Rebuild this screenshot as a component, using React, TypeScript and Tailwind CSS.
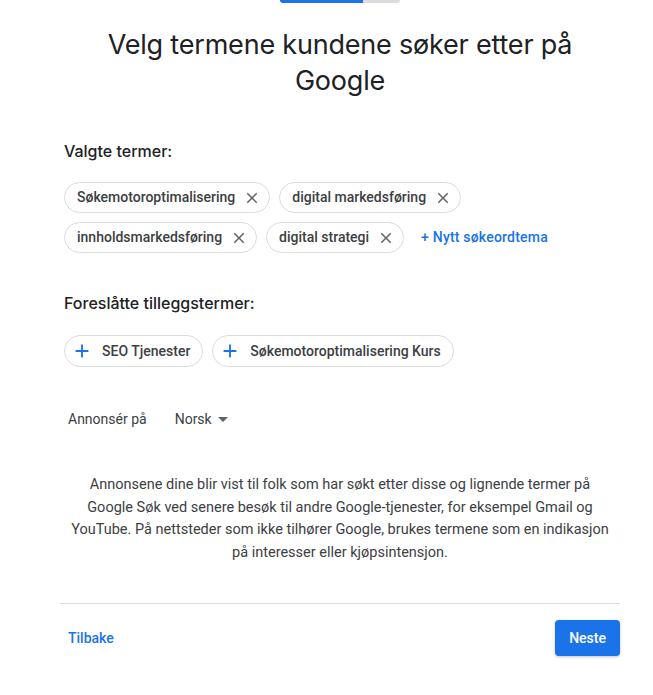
import React from "react";

const selected = [
  "Søkemotoroptimalisering",
  "digital markedsføring",
  "innholdsmarkedsføring",
  "digital strategi",
];

const suggested = ["SEO Tjenester", "Søkemotoroptimalisering Kurs"];

function CloseIcon() {
  return (
    <svg width="18" height="18" viewBox="0 0 24 24" fill="#5f6368">
      <path d="M19 6.41 17.59 5 12 10.59 6.41 5 5 6.41 10.59 12 5 17.59 6.41 19 12 13.41 17.59 19 19 17.59 13.41 12z" />
    </svg>
  );
}

function PlusIcon() {
  return (
    <svg width="22" height="22" viewBox="0 0 24 24" fill="#1a73e8">
      <path d="M19 13h-6v6h-2v-6H5v-2h6V5h2v6h6v2z" />
    </svg>
  );
}

export default function App() {
  return (
    <div
      className="min-h-screen bg-white text-[#202124]"
      style={{ fontFamily: "Roboto, 'Liberation Sans', sans-serif" }}
    >
      <div className="mx-[60px] w-[560px]">
        <div className="flex justify-center">
          <div className="flex w-[120px] h-[3px] rounded-b-full overflow-hidden">
            <div className="w-[83px] bg-[#1a73e8]" />
            <div className="flex-1 bg-[#dadce0]" />
          </div>
        </div>

        <h1 className="mt-[24px] text-center text-[27px] leading-[36px] tracking-[-0.2px] text-[#202124] font-[Inter,sans-serif]">
          Velg termene kundene søker etter på Google
        </h1>

        <div className="px-1 mt-[42px]">
          <h2 className="text-[16px] font-medium leading-5 font-[Inter,sans-serif]">
            Valgte termer:
          </h2>
          <div className="mt-[21px] flex flex-wrap gap-x-[9px] gap-y-[9px] items-center">
            {selected.map((t) => (
              <div
                key={t}
                className="h-[31px] flex items-center gap-[8px] rounded-full border border-[#dadce0] pl-3 pr-2 text-[14px] font-medium text-[#3c4043]"
              >
                <span>{t}</span>
                <CloseIcon />
              </div>
            ))}
            <button className="ml-[8px] text-[14px] font-medium tracking-[0.2px] text-[#1a73e8]">
              + Nytt søkeordtema
            </button>
          </div>

          <h2 className="mt-[40px] text-[16px] font-medium leading-5 font-[Inter,sans-serif]">
            Foreslåtte tilleggstermer:
          </h2>
          <div className="mt-[22px] flex flex-wrap gap-[9px]">
            {suggested.map((t) => (
              <div
                key={t}
                className="h-[32px] flex items-center gap-[9px] rounded-full border border-[#dadce0] pl-[6px] pr-3 text-[14px] font-medium text-[#3c4043]"
              >
                <PlusIcon />
                <span>{t}</span>
              </div>
            ))}
          </div>

          <div className="mt-[42px] flex items-center text-[14px] text-[#3c4043] pl-1">
            <span>Annonsér på</span>
            <button className="ml-7 flex items-center gap-[6px] text-[#3c4043]">
              Norsk
              <svg width="10" height="5" viewBox="0 0 10 5" fill="#5f6368">
                <path d="M0 0l5 5 5-5z" />
              </svg>
            </button>
          </div>
        </div>

        <p className="mt-[44px] mx-auto w-[540px] text-center text-[14.5px] leading-[22.5px] text-[#3c4043]">
          Annonsene dine blir vist til folk som har søkt etter disse og lignende
          termer på Google Søk ved senere besøk til andre Google-tjenester, for
          eksempel Gmail og YouTube. På nettsteder som ikke tilhører Google,
          brukes termene som en indikasjon på interesser eller kjøpsintensjon.
        </p>

        <div className="mt-[39px] border-t border-[#dadce0]" />

        <div className="mt-4 flex items-center justify-between">
          <button className="ml-2 text-[14px] font-medium text-[#1a73e8]">
            Tilbake
          </button>
          <button className="h-9 px-[14px] rounded bg-[#1a73e8] text-white text-[14px] font-medium shadow-[0_1px_3px_rgba(60,64,67,0.3)]">
            Neste
          </button>
        </div>
      </div>
    </div>
  );
}
